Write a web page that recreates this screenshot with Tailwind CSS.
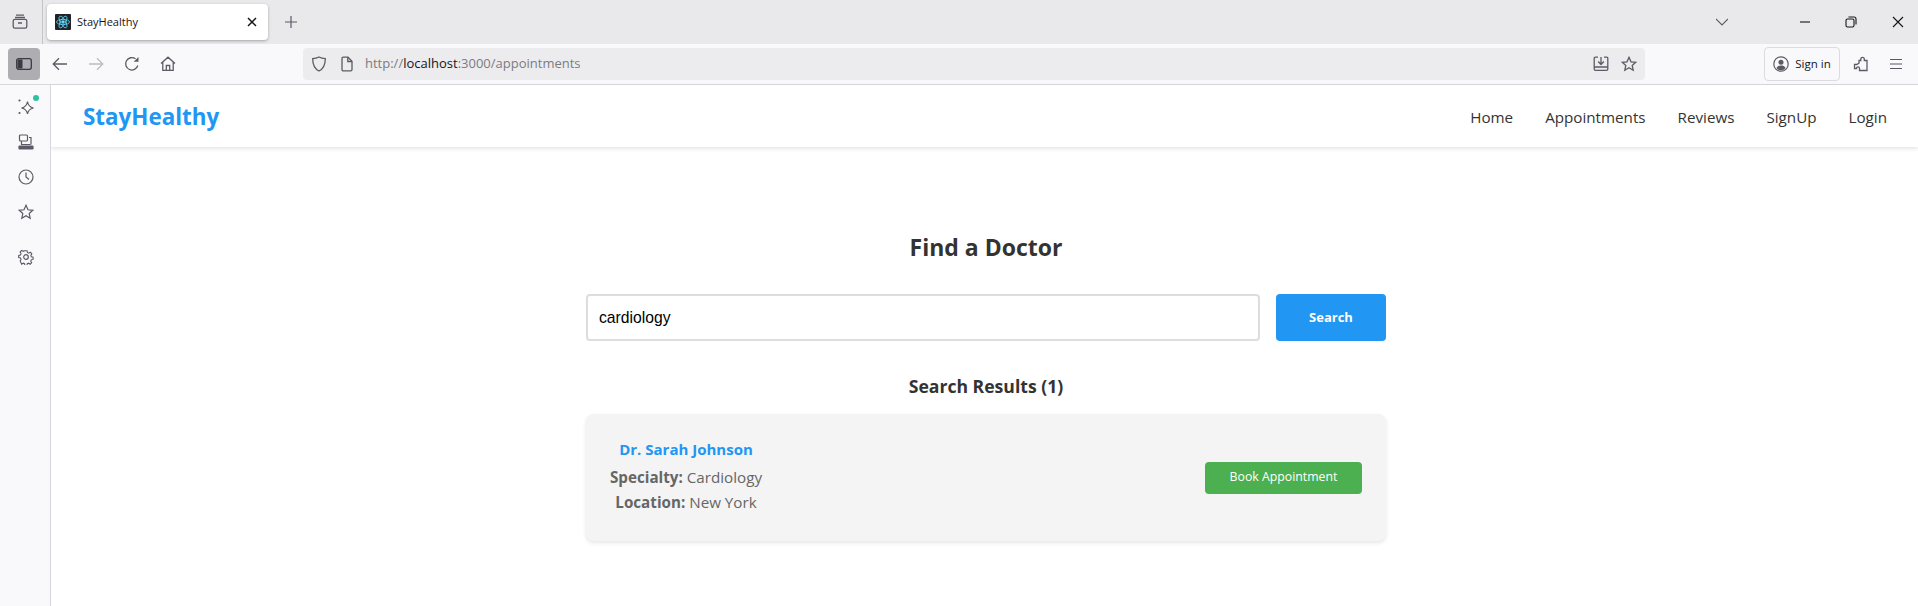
<!DOCTYPE html>
<html lang="en">
<head>
    <meta charset="UTF-8">
    <title>StayHealthy</title>
    <script src="https://cdn.jsdelivr.net/npm/@tailwindcss/browser@4"></script>
</head>
<body class="h-[606px] w-[1918px] overflow-hidden bg-white font-['Open_Sans','Noto_Sans',sans-serif]">

    <!-- tab strip -->
    <div class="flex h-11 items-center bg-[#e9e9ec]">
        <div class="flex h-11 w-[43px] shrink-0 items-center border-r border-[#c4c4c8] pl-3">
            <svg class="h-4 w-4" viewBox="0 0 16 16" fill="none" stroke="#5b5b66" stroke-width="1.300"><path d="M1.200 7c0-1 .6-1.600 1.600-1.600h10.400c1 0 1.600.6 1.600 1.600v5.500c0 1-.6 1.600-1.600 1.600H2.800c-1 0-1.600-.6-1.600-1.600z"/><path d="M3 3.500h10M4 1.200h8M6 9h4"/></svg>
        </div>
        <div class="ml-[4px] flex h-[36px] w-[221px] shrink-0 items-center rounded-[4px] bg-white pl-2 pr-[10px] shadow-[0_1px_3px_rgba(0,0,0,0.3)]">
            <svg class="h-4 w-4 shrink-0 rounded-[1px] bg-[#20232a]" viewBox="0 0 16 16" fill="none" stroke="#61dafb" stroke-width="0.8"><circle cx="8" cy="8" r="1.300" fill="#61dafb"/><ellipse cx="8" cy="8" rx="6.500" ry="2.600"/><ellipse cx="8" cy="8" rx="6.500" ry="2.600" transform="rotate(60 8 8)"/><ellipse cx="8" cy="8" rx="6.500" ry="2.600" transform="rotate(120 8 8)"/></svg>
            <span class="ml-[6px] text-[11px] text-[#15141a]">StayHealthy</span>
            <svg class="ml-auto h-3 w-3" viewBox="0 0 12 12" stroke="#15141a" stroke-width="1.500"><path d="M2 2l8 8M10 2l-8 8"/></svg>
        </div>
        <svg class="ml-[16px] h-3.5 w-3.5 shrink-0" viewBox="0 0 14 14" stroke="#5b5b66" stroke-width="1.200"><path d="M7 1v12M1 7h12"/></svg>
        <svg class="ml-[1418px] h-3 w-3 shrink-0" viewBox="0 0 12 12" fill="none" stroke="#5b5b66" stroke-width="1.100"><path d="M0 3l6 6 6-6"/></svg>
        <svg class="ml-[71px] h-3 w-3 shrink-0" viewBox="0 0 12 12" stroke="#15141a" stroke-width="1.100"><path d="M1 6h10"/></svg>
        <svg class="ml-[34px] h-3 w-3 shrink-0" viewBox="0 0 12 12" fill="none" stroke="#15141a" stroke-width="1.100"><rect x="1" y="3" width="8" height="8" rx="1.500"/><path d="M3.500 1h5.500c1.200 0 2 .8 2 2v5.500"/></svg>
        <svg class="ml-[35px] h-3 w-3 shrink-0" viewBox="0 0 12 12" stroke="#15141a" stroke-width="1.100"><path d="M1 1l10 10M11 1L1 11"/></svg>
    </div>

    <!-- toolbar -->
    <div class="flex h-[41px] items-center border-b border-[#d8d8dc] bg-[#f9f9fb] pb-px">
        <div class="ml-2 flex h-8 w-8 items-center justify-center rounded-[4px] bg-[#adadb2]">
            <svg class="h-4 w-4" viewBox="0 0 16 16" fill="none"><rect x="0.700" y="2.700" width="14.600" height="10.600" rx="2" stroke="#3a3a42" stroke-width="1.300"/><rect x="1.500" y="3.500" width="5" height="9" fill="#3a3a42"/></svg>
        </div>
        <svg class="ml-[12px] h-4 w-4" viewBox="0 0 16 16" fill="none" stroke="#5b5b66" stroke-width="1.300"><path d="M15 8H1.500M7 2.200L1.200 8 7 13.800"/></svg>
        <svg class="ml-[20px] h-4 w-4" viewBox="0 0 16 16" fill="none" stroke="#bdbdc2" stroke-width="1.300"><path d="M1 8h13.500M9 2.200L14.800 8 9 13.800"/></svg>
        <svg class="ml-[20px] h-4 w-4" viewBox="0 0 16 16" fill="none" stroke="#5b5b66" stroke-width="1.300"><path d="M13.800 9.500A6.200 6.200 0 1 1 11.500 2.800"/><path d="M14.500 1v4.800H9.700z" fill="#5b5b66" stroke="none"/></svg>
        <svg class="ml-[20px] h-4 w-4" viewBox="0 0 16 16" fill="none" stroke="#5b5b66" stroke-width="1.300"><path d="M1 7.500L8 1.200l7 6.300M2.800 6.200V14.300h10.400V6.200M6.300 14.300V9.500h3.400v4.800"/></svg>
        <!-- address bar -->
        <div class="ml-[127px] flex h-8 w-[1342px] shrink-0 items-center rounded-[4px] bg-[#ececee] pl-[8px] pr-[8px]">
            <svg class="h-4 w-4" viewBox="0 0 16 16" fill="none" stroke="#5b5b66" stroke-width="1.300"><path d="M8 1c2 1 4 1.500 6.300 1.700 0 6-1.800 10-6.300 12.300C3.500 12.700 1.700 8.700 1.700 2.700 4 2.500 6 2 8 1z"/></svg>
            <svg class="ml-[12px] h-4 w-4" viewBox="0 0 16 16" fill="none" stroke="#5b5b66" stroke-width="1.300"><path d="M3 2.500c0-.8.500-1.300 1.300-1.300h4.700L13 5.300v8.200c0 .8-.5 1.300-1.300 1.300H4.300c-.8 0-1.300-.5-1.300-1.300z"/><path d="M8.800 1.200v4.300H13"/></svg>
            <span class="ml-[10px] text-[13px] text-[#7b7b82]">http://<span class="text-[#15141a]">localhost</span>:3000/appointments</span>
            <svg class="ml-auto h-4 w-4" viewBox="0 0 16 16" fill="none" stroke="#5b5b66" stroke-width="1.300"><path d="M5 1.200H2.500c-.8 0-1.300.5-1.300 1.300v10.500c0 .8.500 1.300 1.300 1.300h11c.8 0 1.300-.5 1.300-1.300V2.500c0-.8-.5-1.300-1.300-1.300H11M1.200 11h13.600M8 1v7M5.200 5.500L8 8.500l2.800-3"/></svg>
            <svg class="ml-[12px] h-4 w-4" viewBox="0 0 16 16" fill="none" stroke="#5b5b66" stroke-width="1.300"><path d="M8 1.300l2 4.500 4.800.5-3.600 3.200 1 4.800L8 11.800l-4.200 2.500 1-4.800L1.200 6.300 6 5.800z"/></svg>
        </div>
        <div class="ml-[119px] flex h-[34px] w-[76px] shrink-0 items-center justify-center gap-[6px] rounded-[4px] border border-[#dcdce0] text-[11.500px] text-[#15141a]">
            <svg class="h-4 w-4" viewBox="0 0 16 16" fill="none" stroke="#5b5b66" stroke-width="1.200"><circle cx="8" cy="8" r="7.200"/><circle cx="8" cy="6.200" r="2.500" fill="#5b5b66" stroke="none"/><path d="M3.500 12c1-2 2.500-2.500 4.500-2.500s3.500.5 4.500 2.500c-1 1.500-2.600 2.200-4.500 2.200s-3.500-.7-4.500-2.200z" fill="#5b5b66" stroke="none"/></svg>
            <span>Sign in</span>
        </div>
        <svg class="ml-[13px] h-4 w-4 shrink-0" viewBox="0 0 16 16" fill="none" stroke="#5b5b66" stroke-width="1.300"><path d="M6 4.500h1.800V3c0-2.300 3.500-2.300 3.500 0v1.500h2.700v10H6.500v-2.300c0-1.700-3-1.700-3 0v.3H1.500V8.500h2c1.800 0 2-1.500 2.500-1.500z"/></svg>
        <svg class="ml-[19px] h-4 w-4 shrink-0" viewBox="0 0 16 16" stroke="#5b5b66" stroke-width="1.200"><path d="M2 3.500h12M2 8h12M2 12.500h12"/></svg>
    </div>

    <div class="flex h-[521px]">
        <!-- browser sidebar -->
        <div class="relative flex w-[51px] flex-col items-center border-r border-[#d8d8dc] bg-[#f9f9fb] pl-[2px] pt-[14px]">
            <span class="absolute left-[33px] top-[10px] h-[6px] w-[6px] rounded-full bg-[#2ac3a2]"></span>
            <svg class="h-4 w-4" viewBox="0 0 16 16" fill="none" stroke="#5b5b66" stroke-width="1.200"><path d="M9.500 2.500c.6 4 2 5.700 6 6.500-4 .8-5.400 2.500-6 6-.6-3.500-2-5.200-6-6 4-.8 5.400-2.500 6-6.500z"/><circle cx="1.500" cy="1.500" r="1.100" fill="#5b5b66" stroke="none"/><circle cx="1.500" cy="14" r="1.100" fill="#5b5b66" stroke="none"/></svg>
            <svg class="mt-[19px] h-4 w-4" viewBox="0 0 16 16" fill="none" stroke="#5b5b66" stroke-width="1.200"><rect x="1.500" y="1" width="8" height="6" rx="1"/><path d="M11 3.500h2v7M3.500 7v3.500h9"/><rect x="1" y="12" width="14" height="3" rx="0.500" fill="#5b5b66"/></svg>
            <svg class="mt-[19px] h-4 w-4" viewBox="0 0 16 16" fill="none" stroke="#5b5b66" stroke-width="1.200"><circle cx="8" cy="8" r="7"/><path d="M8 3.500V8l3 2.500"/></svg>
            <svg class="mt-[19px] h-4 w-4" viewBox="0 0 16 16" fill="none" stroke="#5b5b66" stroke-width="1.200"><path d="M8 1.300l2 4.500 4.800.5-3.600 3.200 1 4.800L8 11.800l-4.200 2.500 1-4.800L1.200 6.300 6 5.800z"/></svg>
            <svg class="mt-[29px] h-4 w-4" viewBox="0 0 16 16" fill="none" stroke="#5b5b66" stroke-width="1.200"><circle cx="8" cy="8" r="2.300"/><path d="M6.800 1h2.400l.4 2 1.500.7 1.800-1 1.600 1.800-1.100 1.700.5 1.600 2 .5v2.400l-2 .4-.6 1.500 1 1.800-1.700 1.600-1.700-1.100-1.500.6-.5 2H6.800l-.4-2-1.500-.6-1.700 1.100L1.500 12.400l1-1.800-.6-1.500-2-.4V6.300l2-.5.600-1.600-1.100-1.700 1.700-1.800 1.800 1 1.500-.7z" transform="translate(.8 .8) scale(.9)"/></svg>
        </div>

        <!-- page -->
        <div class="flex-1 bg-white">
            <nav class="flex h-[62px] items-center justify-between pl-8 pr-[31px] pt-[2px] shadow-[0_2px_4px_rgba(0,0,0,0.1)]">
                <a class="text-[22.400px] font-bold text-[#2196f3]">StayHealthy</a>
                <div class="flex gap-8 text-[15.200px] text-[#333]">
                    <a>Home</a>
                    <a>Appointments</a>
                    <a>Reviews</a>
                    <a>SignUp</a>
                    <a>Login</a>
                </div>
            </nav>

            <main class="ml-[535px] w-[800px] pt-[84px]">
                <h1 class="text-center text-[23px] leading-8 font-bold text-[#333]">Find a Doctor</h1>
                <div class="mt-[31px] flex gap-4">
                    <input class="h-[47px] flex-1 rounded-[4px] border-2 border-[#ddd] px-[11px] font-['Liberation_Sans',sans-serif] text-[15.700px] text-black" value="cardiology">
                    <button class="w-[110px] rounded-[4px] bg-[#2196f3] text-[13px] font-bold text-white">Search</button>
                </div>
                <h2 class="mt-[33px] text-center text-[17.600px] leading-6 font-bold text-[#333]">Search Results (1)</h2>
                <div class="mt-[16px] flex h-[127px] items-center justify-between rounded-lg bg-[#f4f4f4] pl-6 pr-6 shadow-[0_2px_4px_rgba(0,0,0,0.1)]">
                    <div class="mb-[3px] text-center text-[15.200px] leading-[25px] text-[#666]">
                        <h3 class="mb-[4px] text-[15px] leading-6 font-bold text-[#2196f3]">Dr. Sarah Johnson</h3>
                        <p><strong>Specialty:</strong> Cardiology</p>
                        <p><strong>Location:</strong> New York</p>
                    </div>
                    <button class="h-8 w-[157px] rounded-[4px] bg-[#4caf50] text-[12.300px] font-medium text-white">Book Appointment</button>
                </div>
            </main>
        </div>
    </div>
</body>
</html>
